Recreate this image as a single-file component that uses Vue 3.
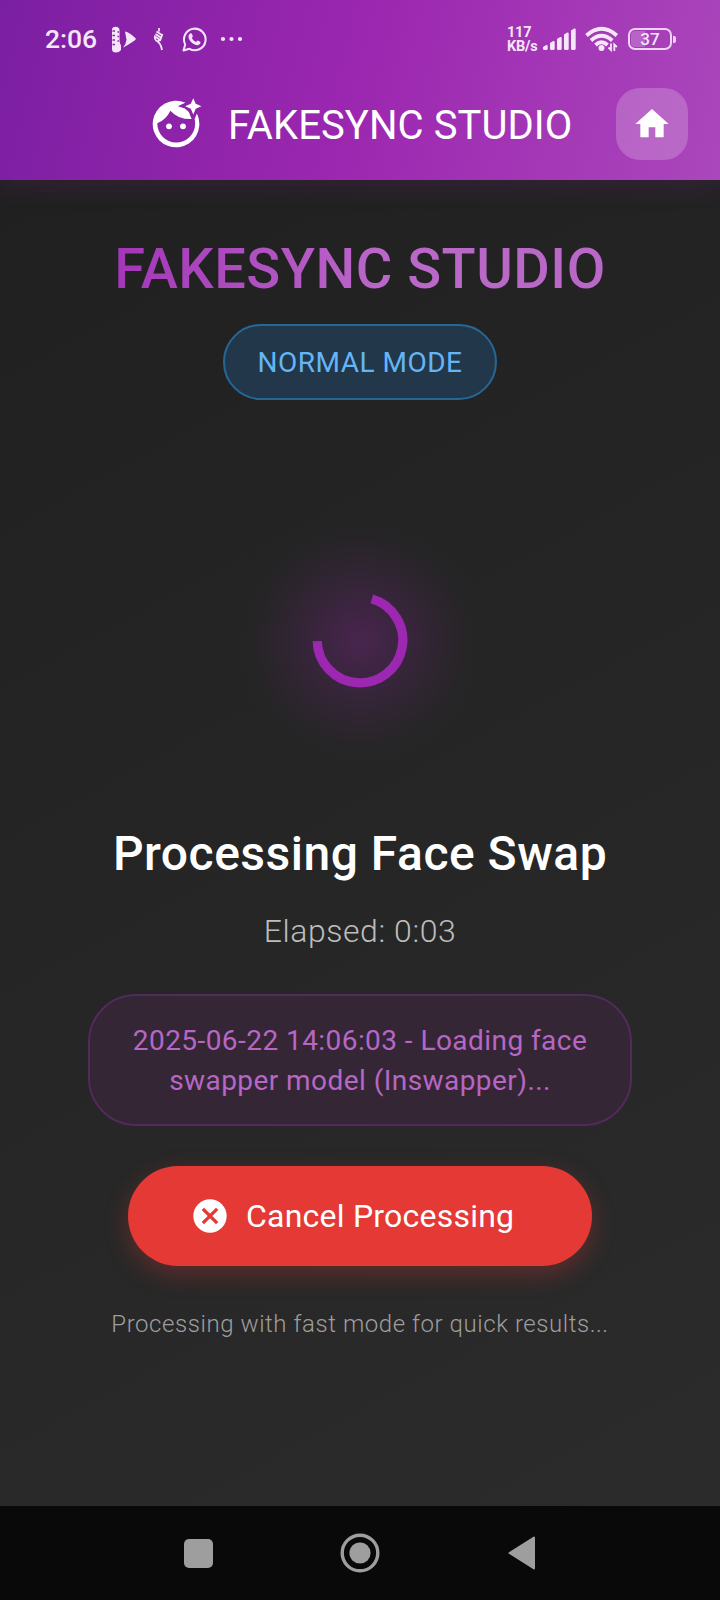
<script setup>
const clock = '2:06'
const title = 'FAKESYNC STUDIO'
const bars = [
  { x: 0, h: 5 },
  { x: 7, h: 9 },
  { x: 14, h: 13 },
  { x: 21, h: 17.5 },
  { x: 28, h: 21.5 }
]
</script>

<template>
  <div class="screen">
    <header class="top">
      <div class="status">
        <span class="clock">{{ clock }}</span>
        <svg class="s-film" width="25" height="27" viewBox="0 0 25 27">
          <path d="M4.500 .8q4 0 4 3.500V14q0 3 1.500 5.500V24q-2 2.500-5 2.500Q1 26.500 1 23V3Q1.500 .8 4.500 .8z" fill="currentColor" />
          <path d="M1.500 5H4M1.500 9.500H4M1.500 14H4M1.500 18.500H4M6.500 6h1.500M6.500 10.500h1.500M6.500 15h1.500" stroke="#8a22a9" stroke-width="1.400" />
          <path d="M14 5.500q5 1 10.500 6.800.8 1-.5 2-5 3.500-12 7.500 3-3.500 3.500-8z" fill="currentColor" />
        </svg>
        <svg class="s-quill" width="12" height="24" viewBox="0 0 12 24" fill="none" stroke="currentColor">
          <path d="M6 1v3.500M3.500 4.500l6 4M2.500 7l6 4M2 9.500l6 4M9.500 7 7.500 12.500" stroke-width="1.700" />
          <path d="M2 8.500q-.8 4.500 2.500 6 2 1 3.500 4.500l1 4M4 15l3.500-2.500" stroke-width="1.800" />
        </svg>
        <svg class="s-wa" width="25" height="25" viewBox="0 0 25 25">
          <path d="M1.500 23.500l1.700-6.100A10.800 10.800 0 1 1 7.400 21.800z" fill="none" stroke="currentColor" stroke-width="2" stroke-linejoin="round" />
          <path d="M8.300 6.500c.8-.4 1.400-.1 1.700.7l.8 1.900c.2.500-.8 1.300-.9 1.800.9 1.900 2.300 3.200 4.300 4 .6-.3 1.200-1.500 1.700-1.300l2.200 1.100c.7.400.3 1.700-.2 2.400-1.300 1.500-3.500 1.300-5.700.2-3-1.600-5.300-4.300-5.700-7.100-.2-1.600.7-3.100 1.800-3.700z" fill="currentColor" />
        </svg>
        <svg class="s-dots" width="24" height="6" viewBox="0 0 24 6" fill="currentColor">
          <circle cx="3" cy="3" r="2.100" /><circle cx="11.500" cy="3" r="2.100" /><circle cx="20" cy="3" r="2.100" />
        </svg>
        <span class="rate"><b>117</b><b>KB/s</b></span>
        <svg class="s-signal" width="34" height="22" viewBox="0 0 34 22" fill="currentColor">
          <path v-for="b in bars" :key="b.x" :d="`M${b.x} ${24 - b.h}l3.200-2q1.500-.3 1.500 1V20.500q0 1.500-1.500 1.500h-1.700q-1.500 0-1.500-1.500z`" />
        </svg>
        <svg class="s-wifi" width="34" height="26" viewBox="0 0 34 26">
          <g fill="none" stroke="currentColor" stroke-width="3.800">
            <path d="M1.500 9.500Q16.500-4 31.800 9.500" />
            <path d="M6 14.500Q16.500 5 27.300 14.500" />
            <path d="M10.500 19Q16.500 13.500 22.500 19" />
          </g>
          <circle cx="16.500" cy="22" r="3" fill="currentColor" />
          <path d="M26 17.500V24l-2.500-2.500M29.300 25v-6.500l2.500 2.500" fill="none" stroke="currentColor" stroke-width="1.800" />
        </svg>
        <span class="battery"><span class="level">37</span></span>
      </div>
      <div class="toolbar">
        <svg class="face" width="56" height="56" viewBox="0 0 24 24" fill="#fff">
          <path d="M15.900 2.800A10 10 0 1 0 21.300 8.300Q21.100 7.900 20.900 7.600L20 9.900Q20.200 10.900 20.200 12A8.100 8.100 0 1 1 4 11.700Q7.700 10.200 9.600 6.300 12.700 10 18.700 9.900L17.500 6.900 15.800 5.400 12.800 4.400 15.900 2.900z" />
          <circle cx="9" cy="13" r="1.250" /><circle cx="15" cy="13" r="1.250" />
          <path d="M19.400 1l1.050 2.350L22.900 4.400l-2.450 1.050L19.400 7.900l-1.050-2.450L15.900 4.400l2.450-1.050z" />
        </svg>
        <span class="name">{{ title }}</span>
        <button class="home" aria-label="Home">
          <svg width="40" height="40" viewBox="0 0 24 24" fill="#fff"><path d="M10 20v-6h4v6h5v-8h3L12 3 2 12h3v8z" /></svg>
        </button>
      </div>
    </header>

    <main class="content">
      <h1>{{ title }}</h1>
      <div class="mode">NORMAL MODE</div>
      <div class="glow">
        <svg width="96" height="96" viewBox="-48 -48 96 96">
          <path d="M11.800-41.100A42.800 42.800 0 1 1-42.780 1.100" fill="none" stroke="#9c27b0" stroke-width="9.300" />
        </svg>
      </div>
      <h2>Processing Face Swap</h2>
      <p class="elapsed">Elapsed: 0:03</p>
      <div class="log">2025-06-22 14:06:03 - Loading face<br />swapper model (Inswapper)...</div>
      <button class="cancel">
        <svg width="40" height="40" viewBox="0 0 24 24">
          <circle cx="12" cy="12" r="10" fill="#fff" />
          <path d="M7.700 7.700l8.600 8.600M16.300 7.700l-8.600 8.600" stroke="#e53935" stroke-width="2" />
        </svg>
        <span>Cancel Processing</span>
      </button>
      <p class="hint">Processing with fast mode for quick results...</p>
    </main>

    <nav class="nav">
      <span><i class="recent"></i></span>
      <span>
        <svg width="40" height="40" viewBox="0 0 40 40">
          <circle cx="20" cy="20" r="17.800" fill="none" stroke="#9e9e9e" stroke-width="3.400" />
          <circle cx="20" cy="20" r="10.600" fill="#9e9e9e" />
        </svg>
      </span>
      <span>
        <svg width="28" height="34" viewBox="0 0 28 34"><path d="M1.500 17 26 1.500v31z" fill="#9e9e9e" stroke="#9e9e9e" stroke-width="2" stroke-linejoin="round" /></svg>
      </span>
    </nav>
  </div>
</template>

<style>
body { margin: 0; background: #212121; }
</style>

<style scoped>
.screen {
  width: 720px;
  height: 1600px;
  display: flex;
  flex-direction: column;
  overflow: hidden;
  font-family: Roboto, "Liberation Sans", sans-serif;
  background: linear-gradient(151.500deg, #1f1f1f, #2c2c2c);
}
svg { display: block; flex: none; }
h1, h2, p { margin: 0; white-space: nowrap; }
button { border: 0; padding: 0; font-family: inherit; }

.top {
  height: 180px;
  flex: none;
  background: linear-gradient(104deg, #7b1fa2, #9c27b0 50%, #ab47bc);
  box-shadow: 0 6px 24px rgba(156, 39, 176, 0.160);
}
.status {
  height: 68px;
  box-sizing: border-box;
  padding: 10px 45px 0 45px;
  display: flex;
  align-items: center;
  color: #f6e6fa;
}
.clock { width: 66px; font-size: 26.500px; font-weight: 500; line-height: 32px; }
.s-quill { margin-left: 17px; }
.s-wa { margin-left: 17px; }
.s-dots { margin-left: 13px; }
.rate {
  display: flex;
  flex-direction: column;
  width: 36px;
  margin-left: auto;
  padding-top: 1px;
  font-size: 14.500px;
  line-height: 14px;
  letter-spacing: -0.200px;
}
.s-signal { margin-right: 8px; }
.s-wifi { margin-right: 9px; }
.battery {
  position: relative;
  width: 44px;
  height: 22px;
  margin-right: 3px;
  box-sizing: border-box;
  border: 2px solid #eed3f5;
  border-radius: 7px;
  padding: 1px;
}
.battery::after {
  content: "";
  position: absolute;
  left: 43px;
  top: 6px;
  width: 3px;
  height: 7px;
  border-radius: 0 2px 2px 0;
  background: #eed3f5;
}
.level {
  display: block;
  height: 16px;
  border-radius: 4px;
  background: linear-gradient(90deg, rgba(255, 255, 255, 0.200) 37%, transparent 37%);
  font-size: 17px;
  font-weight: 500;
  line-height: 17px;
  text-align: center;
}

.toolbar { height: 112px; display: flex; align-items: center; padding: 0 32px 0 148px; }
.name { margin-left: 24px; padding-top: 3px; font-size: 40px; line-height: 48px; letter-spacing: 0.080px; color: #fff; white-space: nowrap; }
.home {
  width: 72px;
  height: 72px;
  margin-left: auto;
  border-radius: 24px;
  background: rgba(255, 255, 255, 0.200);
  display: grid;
  place-items: center;
}

.content { flex: 1; display: flex; flex-direction: column; align-items: center; padding-top: 56px; }
h1 {
  font-size: 56px;
  font-weight: 500;
  line-height: 66px;
  letter-spacing: 0.500px;
  background: linear-gradient(90deg, #a336b7, #ba68c8 55%);
  -webkit-background-clip: text;
  background-clip: text;
  color: transparent;
}
.mode {
  box-sizing: border-box;
  width: 274px;
  height: 76px;
  margin-top: 22px;
  border: 2px solid #276796;
  border-radius: 38px;
  background: #22384a;
  color: #64b5f6;
  font-size: 28px;
  line-height: 74px;
  letter-spacing: 0.500px;
  text-align: center;
  white-space: nowrap;
}
.glow {
  width: 280px;
  height: 280px;
  margin-top: 100px;
  display: grid;
  place-items: center;
  background: radial-gradient(circle closest-side, rgba(156, 39, 176, 0.300), rgba(156, 39, 176, 0.110) 48%, rgba(156, 39, 176, 0.015) 76%, rgba(156, 39, 176, 0));
}
h2 { margin-top: 46px; font-size: 48px; font-weight: 500; line-height: 56px; letter-spacing: 0.500px; color: #fff; }
.elapsed { margin-top: 30px; font-size: 32px; font-weight: 300; line-height: 38px; letter-spacing: 0.560px; color: #bdbdbd; }
.log {
  box-sizing: border-box;
  width: 544px;
  height: 132px;
  margin-top: 44px;
  padding: 25px 0 23px;
  border: 2px solid #522a5c;
  border-radius: 48px;
  background: #352636;
  color: #b766c5;
  font-size: 28px;
  font-weight: 400;
  line-height: 40px;
  letter-spacing: 0.440px;
  text-align: center;
  white-space: nowrap;
}
.cancel {
  width: 464px;
  height: 100px;
  margin-top: 40px;
  box-sizing: border-box;
  padding-left: 62px;
  border-radius: 50px;
  background: #e53935;
  box-shadow: 0 8px 24px rgba(229, 57, 53, 0.300);
  display: flex;
  align-items: center;
  gap: 16px;
  color: #fff;
  font-size: 32px;
  font-weight: 400;
  letter-spacing: 0.220px;
  white-space: nowrap;
}
.hint { margin-top: 44px; font-size: 24px; font-weight: 300; line-height: 28px; letter-spacing: 0.560px; color: #9e9e9e; }

.nav { height: 94px; flex: none; background: #090909; display: flex; justify-content: center; }
.nav span { width: 161.500px; display: grid; place-items: center; }
.recent { width: 29px; height: 29px; border-radius: 5px; background: #9e9e9e; }
</style>
